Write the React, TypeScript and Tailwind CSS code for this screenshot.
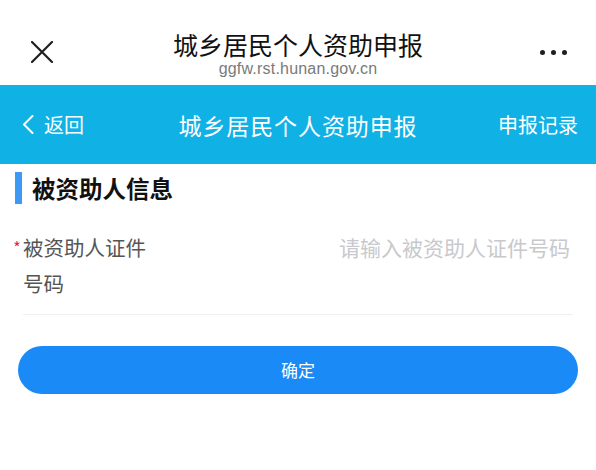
import React from "react";

export default function App() {
  const cjk = { fontFamily: '"Noto Sans CJK SC", "Noto Sans", sans-serif' };
  return (
    <div className="w-[596px] h-[470px] bg-white overflow-hidden" style={cjk}>
      {/* Browser header */}
      <div className="h-[85px] grid grid-cols-[1fr_auto_1fr] items-start bg-white">
        <div className="pt-[41px] pl-[31px]">
          <svg width="22" height="22" viewBox="0 0 22 22" className="block">
            <path d="M1 1 L21 21 M21 1 L1 21" stroke="#1f1f1f" strokeWidth="2.2" strokeLinecap="round" />
          </svg>
        </div>
        <div className="flex flex-col items-center pt-[31px]">
          <div className="text-[25px] leading-[26px] text-[#111]">城乡居民个人资助申报</div>
          <div
            className="mt-[3px] text-[16px] leading-[17px] tracking-[0.2px] text-[#7a7a7a]"
            style={{ fontFamily: '"Liberation Sans", Arial, sans-serif' }}
          >
            ggfw.rst.hunan.gov.cn
          </div>
        </div>
        <div className="flex justify-end gap-[6px] pt-[50px] pr-[29px]">
          <span className="w-[5px] h-[5px] rounded-full bg-[#1f1f1f]" />
          <span className="w-[5px] h-[5px] rounded-full bg-[#1f1f1f]" />
          <span className="w-[5px] h-[5px] rounded-full bg-[#1f1f1f]" />
        </div>
      </div>

      {/* Blue nav bar */}
      <div className="h-[79px] bg-[#10b1e5] grid grid-cols-[1fr_auto_1fr] items-center text-white">
        <div className="flex items-center pl-[22px]">
          <svg width="12" height="19" viewBox="0 0 12 19" className="block">
            <path d="M10.5 1 L2 9.5 L10.5 18" fill="none" stroke="#ffffff" strokeWidth="2" strokeLinecap="round" strokeLinejoin="round" />
          </svg>
          <span className="ml-[10px] text-[20px] leading-[24px]">返回</span>
        </div>
        <div className="text-[23px] leading-[28px] tracking-[0.9px]">城乡居民个人资助申报</div>
        <div className="flex justify-end pr-[18px] text-[20px] leading-[24px]">申报记录</div>
      </div>

      {/* Section header */}
      <div className="flex items-center pt-[8px]">
        <div className="ml-[15px] w-[7px] h-[32px] bg-[#3d9af4]" />
        <div className="ml-[10px] text-[23.5px] leading-[32px] font-bold text-[#111]">被资助人信息</div>
      </div>

      {/* Form row */}
      <div className="mx-[23px] mr-[23px] pt-[25px] pb-[13px] border-b border-[#eeeff2] flex items-start">
        <span className="-ml-[12px] w-[12px] text-[#e0283a] text-[16px] leading-[36px] text-center">*</span>
        <div className="w-[126px] text-[20.5px] leading-[36px] text-[#555]">被资助人证件号码</div>
        <div className="flex-1 text-right pr-[3px] text-[21px] leading-[36px] text-[#c8c9cc]">请输入被资助人证件号码</div>
      </div>

      {/* Submit button */}
      <div className="px-[18px] mt-[31px]">
        <button className="w-full h-[48px] rounded-full bg-[#1a8af7] text-white text-[17px] flex items-center justify-center">
          确定
        </button>
      </div>
    </div>
  );
}
